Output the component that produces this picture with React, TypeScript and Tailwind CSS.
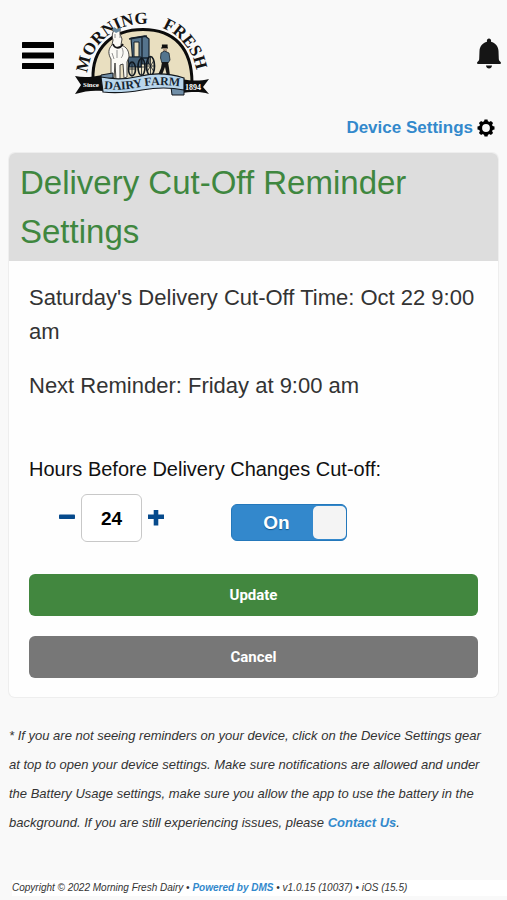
import { useState } from "react";

function MenuIcon() {
  return (
    <svg viewBox="0 0 32 28" className="h-7 w-8" aria-hidden="true">
      <rect x="0" y="0" width="32" height="6" rx="0.5" />
      <rect x="0" y="10.5" width="32" height="6" rx="0.5" />
      <rect x="0" y="21" width="32" height="6" rx="0.5" />
    </svg>
  );
}

function BellIcon() {
  return (
    <svg viewBox="0 0 24 31" className="h-[31px] w-6" fill="#151515" aria-hidden="true">
      <path d="M12 0.5c1.3 0 2.2 1 2.1 2.4l-.1.9c4.3 1 7.3 4.7 7.5 9.2l.3 8c.1 1.200.5 1.800 1.300 2.500.6.5.9 1 .9 1.500 0 .6-.4.9-1.100.9H1.100C.4 25.900 0 25.600 0 25c0-.5.3-1 .9-1.500.8-.7 1.200-1.300 1.300-2.500l.3-8C2.700 8.500 5.700 4.800 10 3.800l-.1-.9C9.800 1.500 10.700.5 12 .5z" />
      <path d="M9 27.500h6c-.2 1.900-1.400 3-3 3s-2.800-1.100-3-3z" />
    </svg>
  );
}

function GearIcon() {
  const teeth = [0, 45, 90, 135, 180, 225, 270, 315];
  return (
    <svg viewBox="0 0 18 18" className="size-[18px]" aria-hidden="true">
      {teeth.map((angle) => (
        <path key={angle} d="M6.800 3.500 7.500 0.500h3L11.200 3.500z" transform={`rotate(${angle} 9 9)`} />
      ))}
      <circle cx="9" cy="9" r="5.400" fill="none" stroke="#000" strokeWidth="3" />
    </svg>
  );
}

function Logo() {
  return (
    <svg viewBox="0 0 136 84" className="h-[84px] w-[136px] overflow-visible" role="img" aria-label="Morning Fresh Dairy Farm, since 1894">
      <defs>
        <path id="arch-text" d="M13 68a55 55 0 0 1 110 0" />
        <path id="ribbon-text" d="M30 78Q48 80 66 76T110 76" />
      </defs>
      <path d="M20 68C18 36 37 18 69 18s51 20 49 54z" fill="#e9dfc0" />
      <path d="M19 68C18 37 38 18.500 69 18.500S118 37 118 72" fill="none" stroke="#0b0b0b" strokeWidth="3" />

      <g fontFamily="Liberation Serif, Times New Roman, serif" fontWeight="700" fontSize="17" fill="#141414">
        <text>
          <textPath href="#arch-text" startOffset="6">MORNING</textPath>
        </text>
        <text>
          <textPath href="#arch-text" startOffset="107">FRESH</textPath>
        </text>
      </g>

      {/* carriage */}
      <path d="M57 27 71 25l4 3v25H59z" fill="#55748d" stroke="#14202b" strokeWidth="1.200" />
      <path d="M60 31h5v15h-5z" fill="#e9dfc0" stroke="#14202b" />
      <path d="M68 26v27M55 28l18-3M55 47h20" stroke="#14202b" strokeWidth="1.300" />
      <path d="M54 46h13v10H55z" fill="#456178" stroke="#14202b" />
      <g fill="none" stroke="#10181f">
        <ellipse cx="76.500" cy="55" rx="4" ry="9.500" strokeWidth="1.700" />
        <path d="M76.500 46v18M73.500 50l6 10M79.500 50l-6 10M73 55h7" strokeWidth="0.800" />
        <ellipse cx="67.500" cy="56" rx="3.500" ry="8.500" strokeWidth="1.600" />
        <ellipse cx="58" cy="58" rx="3.500" ry="7" strokeWidth="1.600" />
        <path d="M58 52v13M55 58h6M64 56h7M67.500 48v16" strokeWidth="0.800" />
      </g>

      {/* horse */}
      <path
        d="M39 21l2-4 2 4 3-3v5l2 5-1 6c6 2 8 6 8 12l-2 5v15l-3 1-1-14-3 1v15h-4l-1-17-1 15-3-1V48c-3-5-3-10 1-14l1-5c-1-3-1-5 0-8z"
        fill="#fbfaf5"
        stroke="#343434"
        strokeWidth="0.900"
      />
      <path d="M38 19l2-3 3 2 4-2-1 4-4 2z" fill="#67899f" />
      <path d="M39 33c2 5 7 5 10 0" fill="none" stroke="#151515" strokeWidth="1.800" />
      <path d="M41 23v4m5-4v4M43 39v8m5-10c2 4 1 8-1 10M38 42l2 6" fill="none" stroke="#777" strokeWidth="0.800" />

      {/* farmer */}
      <path d="M87 37h7M88.500 36v-2h4.500v2z" fill="#101010" stroke="#101010" strokeWidth="1.200" />
      <path d="M89 37.500h4v3.500h-4z" fill="#b79d85" />
      <path d="M87 42l3.500-2 4.500 2 1 7-2 3h-6l-1.500-5z" fill="#53758e" stroke="#17222b" strokeWidth="0.800" />
      <path d="M88 51h6l1 6 1 8h-3l-2-9-3 8h-4l3-7z" fill="#151515" />

      {/* ribbon tails */}
      <path d="M1 65c9 2 17 1 28-1v16c-10-1-18 0-28 3l6-9z" fill="#0d0d0d" />
      <path d="M108 68c10 2 18 2 27 0l-6 8 6 7c-9-3-18-2-29-1z" fill="#0d0d0d" />
      <path d="M27 64l12-2v5l-12 1zM97 76l13-2v10H98z" fill="#708ea7" stroke="#10151a" />
      <path d="M27 66q19 4 40-1t43 2v12q-20-4-42 0t-39 2z" fill="#b9d6ec" stroke="#10151a" strokeWidth="1.200" />
      <g fontFamily="Liberation Serif, Times New Roman, serif" fontWeight="700">
        <text fontSize="12" fill="#172632">
          <textPath href="#ribbon-text">DAIRY FARM</textPath>
        </text>
        <text x="9" y="76" fontSize="7" fill="#fff">Since</text>
        <text x="111" y="79" fontSize="8" fill="#fff">1894</text>
      </g>
    </svg>
  );
}

export default function App() {
  const [hours, setHours] = useState("24");
  const [enabled, setEnabled] = useState(true);
  const step = (by: number) => setHours(String(Math.max(0, Number(hours) + by)));

  return (
    <div className="min-h-screen bg-[#f9f9f9] font-['Liberation_Sans',Arial,sans-serif] text-[#333]">
      <header className="flex h-[111px] items-start justify-between pl-[22px] pr-[6px]">
        <div className="flex items-start gap-5">
          <button type="button" aria-label="Open menu" className="mt-[42px]">
            <MenuIcon />
          </button>
          <a href="#home" className="mt-[11px]">
            <Logo />
          </a>
        </div>
        <button type="button" aria-label="Notifications" className="mt-[38px]">
          <BellIcon />
        </button>
      </header>

      <div className="flex h-[42px] justify-end px-3">
        <a href="#device-settings" className="flex h-[34px] items-center gap-1 text-[17px] font-bold text-[#3389cc]">
          Device Settings
          <GearIcon />
        </a>
      </div>

      <main className="px-[9px]">
        <section className="overflow-hidden rounded-md bg-[#fefefe] ring-1 ring-[#eeeeee]">
          <h1 className="bg-[#dddddd] px-[11px] py-[5px] text-[33px] leading-[49px] text-[#3f873f]">
            Delivery Cut-Off Reminder Settings
          </h1>
          <form className="px-5 pt-5 pb-[19px]" onSubmit={(event) => event.preventDefault()}>
            <p className="text-[22px] leading-[34px]">Saturday's Delivery Cut-Off Time: Oct 22 9:00 am</p>
            <p className="mt-5 text-[22px] leading-[34px]">Next Reminder: Friday at 9:00 am</p>

            <label htmlFor="hours" className="mt-[49px] block text-xl leading-[34px] text-[#111]">
              Hours Before Delivery Changes Cut-off:
            </label>
            <div className="mt-2 flex items-center pl-[30px]">
              <button type="button" aria-label="Fewer hours" onClick={() => step(-1)} className="text-[#064a8c]">
                <svg viewBox="0 0 16 16" className="size-4" aria-hidden="true">
                  <rect y="4.500" width="16" height="4.500" rx="0.800" fill="currentColor" />
                </svg>
              </button>
              <input
                id="hours"
                inputMode="numeric"
                value={hours}
                onChange={(event) => setHours(event.target.value)}
                className="mx-[6px] h-12 w-[61px] rounded-md border border-[#c8c8c8] bg-white pt-[2px] text-center text-[19px] font-bold text-black"
              />
              <button type="button" aria-label="More hours" onClick={() => step(1)} className="text-[#064a8c]">
                <svg viewBox="0 0 16 16" className="size-4" aria-hidden="true">
                  <path d="M5.700 0h4.600v4.500H16V9h-5.700v6.500H5.700V9H0V4.500h5.700z" fill="currentColor" />
                </svg>
              </button>
              <label className="ml-[67px] mt-2 flex h-[37px] w-[116px] cursor-pointer items-center rounded-md border border-[#2478bb] bg-[#3388cc]">
                <input
                  type="checkbox"
                  role="switch"
                  aria-label="Reminder"
                  checked={enabled}
                  onChange={(event) => setEnabled(event.target.checked)}
                  className="peer sr-only"
                />
                <span className="flex-1 pl-2 pt-[2px] text-center text-[19px] font-bold text-white [text-shadow:0_1px_1px_#115588] peer-checked:order-first">
                  {enabled ? "On" : "Off"}
                </span>
                <span className="h-[33px] w-[33px] rounded-[5px] bg-[#f4f4f4]" />
              </label>
            </div>

            <div className="mt-8 flex flex-col gap-5 font-[Roboto,sans-serif] text-[15px] font-bold text-white">
              <button type="submit" className="h-[42px] rounded-md bg-[#42873f]">
                Update
              </button>
              <button type="button" className="h-[42px] rounded-md bg-[#777777]">
                Cancel
              </button>
            </div>
          </form>
        </section>

        <p className="mt-6 pr-2 text-[13px] leading-[29px] italic">
          * If you are not seeing reminders on your device, click on the Device Settings gear at top to open your
          device settings. Make sure notifications are allowed and under the Battery Usage settings, make sure you
          allow the app to use the battery in the background. If you are still experiencing issues, please{" "}
          <a href="#contact" className="font-bold text-[#3389cc]">
            Contact Us
          </a>
          .
        </p>
      </main>

      <footer className="mt-[43px] ml-3 bg-white text-[10px] leading-4 italic">
        Copyright © 2022 Morning Fresh Dairy •{" "}
        <a href="#dms" className="font-bold text-[#3389cc]">
          Powered by DMS
        </a>{" "}
        • v1.0.15 (10037) • iOS (15.5)
      </footer>
    </div>
  );
}
